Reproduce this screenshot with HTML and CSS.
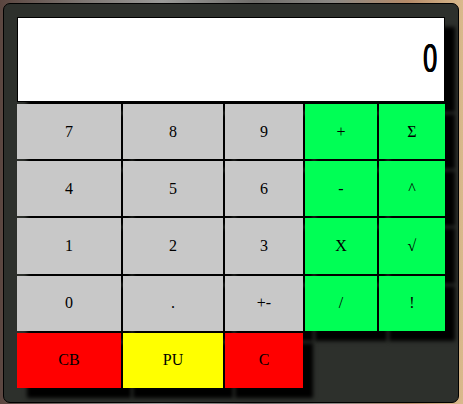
FILE: index.html
```html
<!DOCTYPE html>
<html>
<head>
<meta charset="utf-8">
<link rel="stylesheet" href="styles.css">
</head>
<body>
<div class="calc">
  <div class="display"><span class="digit">0</span></div>
  <div class="keys">
    <button class="key num">7</button>
    <button class="key num">8</button>
    <button class="key num">9</button>
    <button class="key op">+</button>
    <button class="key op">Σ</button>

    <button class="key num">4</button>
    <button class="key num">5</button>
    <button class="key num">6</button>
    <button class="key op">-</button>
    <button class="key op">^</button>

    <button class="key num">1</button>
    <button class="key num">2</button>
    <button class="key num">3</button>
    <button class="key op">X</button>
    <button class="key op">√</button>

    <button class="key num">0</button>
    <button class="key num">.</button>
    <button class="key num">+-</button>
    <button class="key op">/</button>
    <button class="key op">!</button>

    <button class="key clear">CB</button>
    <button class="key pu">PU</button>
    <button class="key clear">C</button>
  </div>
</div>
</body>
</html>
```

FILE: styles.css
```css
html, body {
  margin: 0;
  padding: 0;
}

body {
  width: 463px;
  height: 404px;
  overflow: hidden;
  background:
    linear-gradient(to right, #5b4640 0%, #7d7672 18%, #9a9a98 35%, #6f6d6a 55%, #8a8884 72%, #b48a68 88%, #d9b98c 100%);
}

.calc {
  box-sizing: border-box;
  margin: 3px;
  width: 456px;
  height: 400px;
  padding: 13px;
  background: #2d302c;
  border: 1px solid #000;
  border-radius: 7px;
}

.display {
  box-sizing: border-box;
  width: 428px;
  height: 85px;
  background: #fff;
  border: 1px solid #000;
  box-shadow: 10px 10px 4px #000;
  display: flex;
  justify-content: flex-end;
  align-items: center;
  padding-right: 7px;
  margin-bottom: 2px;
}

.digit {
  font-family: "Liberation Sans", Arial, sans-serif;
  font-weight: normal;
  font-size: 40px;
  line-height: 40px;
  color: #000;
  transform: translateY(-2px) scaleX(0.63);
  transform-origin: right center;
  text-shadow: 0.6px 0 0 #000, -0.6px 0 0 #000;
}

.keys {
  display: grid;
  grid-template-columns: 104px 100px 78px 72px 66px;
  grid-template-rows: repeat(5, 55.2px);
  gap: 2px;
}

.key {
  margin: 0;
  padding: 0;
  border: none;
  border-radius: 0;
  font-family: "Liberation Serif", "Times New Roman", serif;
  font-size: 16px;
  color: #000;
  box-shadow: 10px 10px 4px #000;
  cursor: pointer;
}

.num {
  background: #c8c8c8;
}

.op {
  background: #00ff55;
}

.clear {
  background: #ff0000;
}

.pu {
  background: #ffff00;
}
```
